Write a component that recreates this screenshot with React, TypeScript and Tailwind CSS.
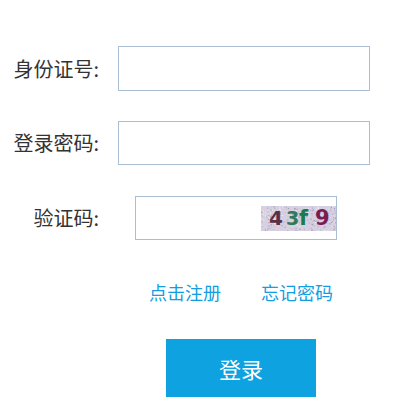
import * as React from 'react';

const Captcha: React.FC = () => {
    // noisy background dots, fixed so the picture is stable
    const dots: { x: number; y: number; c: string }[] = [];
    let s = 7;
    for (let i = 0; i < 260; i++) {
        s = (s * 9301 + 49297) % 233280;
        const x = (s / 233280) * 75;
        s = (s * 9301 + 49297) % 233280;
        const y = (s / 233280) * 25;
        s = (s * 9301 + 49297) % 233280;
        const c = ['#b9b0cb', '#efeaf3', '#c9c0d6', '#a89dbd'][Math.floor((s / 233280) * 4)];
        dots.push({ x, y, c });
    }
    return (
        <svg width="75" height="25" viewBox="0 0 75 25" className="block">
            <rect width="75" height="25" fill="#d6d0e0" />
            {dots.map((d, i) => (
                <rect key={i} x={d.x} y={d.y} width="1.2" height="1.2" fill={d.c} />
            ))}
            <g fontFamily="'DejaVu Sans', sans-serif" fontWeight="bold" fontSize="20">
                <text x="8" y="19" fill="#5b2f45">4</text>
                <text x="25" y="19" fill="#2f7a58" fontSize="19">3</text>
                <text x="38" y="19" fill="#1c7a4e" fontSize="21">f</text>
                <text x="54" y="19" fill="#7a1c52" fontSize="21">9</text>
            </g>
        </svg>
    );
};

const App: React.FC = () => {
    return (
        <div className="w-[411px] h-[419px] bg-white pt-[46px] text-[#333333]" style={{ fontFamily: '"Noto Sans CJK SC", "Noto Sans", sans-serif' }}>
            <div className="flex items-center h-[45px]">
                <label className="w-[99px] text-right text-[20px] leading-none">身份证号:</label>
                <input className="ml-[19px] w-[252px] h-[45px] border border-[#a9bed3] outline-none bg-white" />
            </div>
            <div className="flex items-center h-[44px] mt-[30px]">
                <label className="w-[99px] text-right text-[20px] leading-none">登录密码:</label>
                <input type="password" className="ml-[19px] w-[252px] h-[44px] border border-[#a9bed3] outline-none bg-white" />
            </div>
            <div className="flex items-center h-[44px] mt-[31px]">
                <label className="w-[99px] text-right text-[20px] leading-none">验证码:</label>
                <div className="ml-[36px] w-[202px] h-[44px] border border-[#a9bed3] bg-white flex items-center justify-end">
                    <Captcha />
                </div>
            </div>
            <div className="flex mt-[40px] text-[18px] leading-[24px] text-[#129ee0]">
                <a className="ml-[149px] cursor-pointer">点击注册</a>
                <a className="ml-[40px] cursor-pointer">忘记密码</a>
            </div>
            <button className="block ml-[166px] mt-[35px] w-[150px] h-[58px] bg-[#0ea2e1] text-white text-[22px]">
                登录
            </button>
        </div>
    );
};

export default App;
